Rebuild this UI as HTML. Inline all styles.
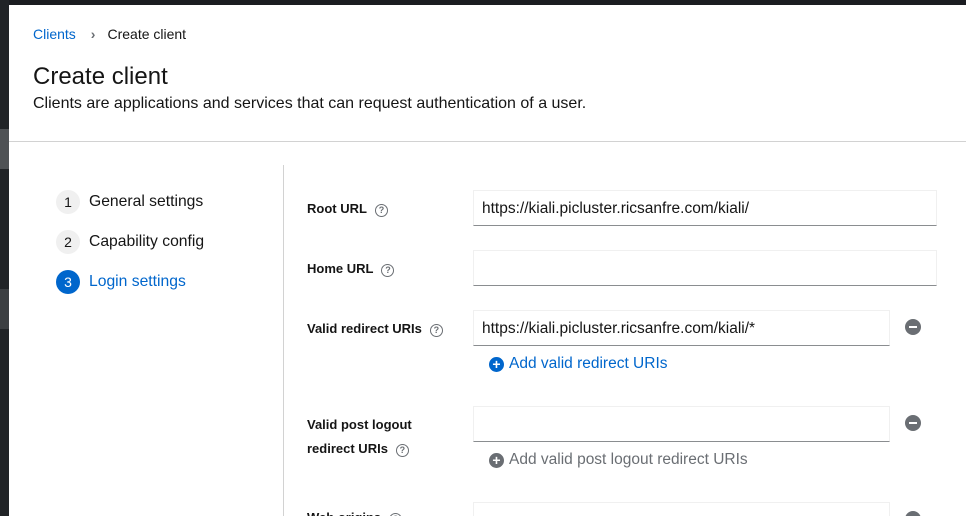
<!DOCTYPE html><html><head><style>
html,body{margin:0;width:966px;height:516px;overflow:hidden}
body{background:#fff;font-family:"Liberation Sans",sans-serif;position:relative;color:#151515}
.a{position:absolute}
.in{position:absolute;border:1px solid #f0f0f0;border-bottom:1px solid #8a8d90;box-sizing:border-box;height:36px;font-size:15.5px;padding:0 8px;line-height:35px;color:#151515}
.lb{position:absolute;left:307px;font-size:13px;font-weight:bold}
.q{display:inline-block;width:11px;height:11px;border:1.3px solid #6a6e73;border-radius:50%;font-size:9px;line-height:11px;text-align:center;color:#6a6e73;margin-left:8px;vertical-align:0px;font-weight:bold}
.c{position:absolute;left:56px;width:24px;height:24px;border-radius:50%;background:#f0f0f0;text-align:center;line-height:24px;font-size:14px;color:#151515}
.st{position:absolute;left:89px;font-size:15.7px}
.m{position:absolute;left:905px;width:16px;height:16px;border-radius:50%;background:#6a6e73}
.m:after{content:"";position:absolute;left:4px;top:7px;width:8px;height:2px;background:#fff}
</style></head><body>
<div class="a" style="left:0;top:0;width:966px;height:5px;background:#1b1d21"></div>
<div class="a" style="left:0;top:0;width:9px;height:516px;background:#212427"></div>
<div class="a" style="left:0;top:129px;width:9px;height:40px;background:#4f5255"></div>
<div class="a" style="left:0;top:289px;width:9px;height:40px;background:#3c3f42"></div>
<div class="a" style="left:33px;top:26px;font-size:14px"><span style="color:#0066cc">Clients</span><span style="color:#6a6e73;margin:0 12px 0 15px;font-weight:bold">›</span>Create client</div>
<div class="a" style="left:33px;top:63px;font-size:24px">Create client</div>
<div class="a" style="left:33px;top:95px;font-size:16px">Clients are applications and services that can request authentication of a user.</div>
<div class="a" style="left:9px;top:141px;width:957px;height:1px;background:#d2d2d2"></div>
<div class="a" style="left:283px;top:165px;width:1px;height:351px;background:#d2d2d2"></div>
<div class="c" style="top:190px">1</div><div class="st" style="top:193px">General settings</div>
<div class="c" style="top:230px">2</div><div class="st" style="top:233px">Capability config</div>
<div class="c" style="top:270px;background:#0066cc;color:#fff">3</div><div class="st" style="top:273px;color:#0066cc">Login settings</div>
<div class="lb" style="top:201px">Root URL<span class="q">?</span></div>
<div class="in" style="left:473px;top:190px;width:464px">https://kiali.picluster.ricsanfre.com/kiali/</div>
<div class="lb" style="top:261px">Home URL<span class="q">?</span></div>
<div class="in" style="left:473px;top:250px;width:464px"></div>
<div class="lb" style="top:321px">Valid redirect URIs<span class="q">?</span></div>
<div class="in" style="left:473px;top:310px;width:417px">https://kiali.picluster.ricsanfre.com/kiali/*</div>
<div class="m" style="top:319px"></div>
<div class="a" style="left:489px;top:355px;font-size:15.5px;color:#0066cc"><span style="display:inline-block;width:15px;height:15px;border-radius:50%;background:#0066cc;color:#fff;text-align:center;line-height:15px;font-weight:bold;font-size:14px;vertical-align:-1px;margin-right:5px">+</span>Add valid redirect URIs</div>
<div class="lb" style="top:413px;line-height:24px">Valid post logout<br>redirect URIs<span class="q">?</span></div>
<div class="in" style="left:473px;top:406px;width:417px"></div>
<div class="m" style="top:415px"></div>
<div class="a" style="left:489px;top:451px;font-size:15.5px;color:#6a6e73"><span style="display:inline-block;width:15px;height:15px;border-radius:50%;background:#6a6e73;color:#fff;text-align:center;line-height:15px;font-weight:bold;font-size:14px;vertical-align:-1px;margin-right:5px">+</span>Add valid post logout redirect URIs</div>
<div class="lb" style="top:510px">Web origins<span class="q">?</span></div>
<div class="in" style="left:473px;top:502px;width:417px"></div>
<div class="m" style="top:511px"></div>
</body></html>
